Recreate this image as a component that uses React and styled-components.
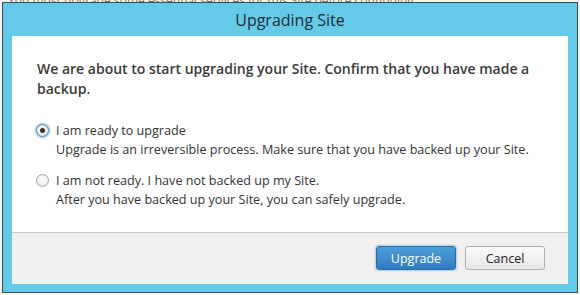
import React from "react";
import styled, { createGlobalStyle } from "styled-components";

const GlobalStyle = createGlobalStyle`
  html, body {
    margin: 0;
    padding: 0;
    background: #f7f7f5;
  }
  body {
    font-family: "Open Sans", "Liberation Sans", sans-serif;
    color: #333;
  }
`;

const Page = styled.div`
  position: relative;
  width: 580px;
  height: 295px;
  overflow: hidden;
`;

const BehindText = styled.div`
  height: 2px;
  overflow: hidden;
  padding-left: 8px;
  font-size: 12px;
  line-height: 2px;
  color: #777;
  white-space: nowrap;
`;

const Window = styled.div`
  position: absolute;
  left: 2px;
  top: 2px;
  width: 576px;
  height: 291px;
  box-sizing: border-box;
  border: 1px solid #3d4a50;
  background: #65c9e8;
  display: flex;
  flex-direction: column;
  padding: 0 9px 8px 9px;
`;

const TitleBar = styled.div`
  height: 33px;
  display: flex;
  align-items: center;
  justify-content: center;
  font-size: 16px;
  color: #1a2e38;
  padding-top: 1px;
  box-sizing: border-box;
`;

const Body = styled.div`
  flex: 1;
  background: #fff;
  display: flex;
  flex-direction: column;
`;

const Content = styled.div`
  flex: 1;
  padding: 23px 25px 0 25px;
  border-bottom: 1px solid #c8c8c8;
`;

const Lead = styled.p`
  margin: 0 0 22px 0;
  font-size: 14px;
  font-weight: 600;
  line-height: 20px;
  color: #3a3a3a;
`;

const Option = styled.label`
  display: grid;
  grid-template-columns: 19px 1fr;
  margin-bottom: 12px;
  font-size: 12.6px;
  line-height: 19px;
  color: #333;
`;

const Radio = styled.span`
  width: 13px;
  height: 13px;
  margin-top: 3px;
  margin-left: -1px;
  box-sizing: border-box;
  border-radius: 50%;
  border: 1px solid ${p => (p.checked ? "#4a7fa8" : "#a6a6a6")};
  background: radial-gradient(circle at 50% 40%, #fdfdfd 0%, #e6e6e6 100%);
  box-shadow: ${p => (p.checked ? "0 0 2px 1px rgba(80,150,210,0.6)" : "none")};
  display: flex;
  align-items: center;
  justify-content: center;
  &::after {
    content: "";
    display: ${p => (p.checked ? "block" : "none")};
    width: 5px;
    height: 5px;
    border-radius: 50%;
    background: #333;
  }
`;

const Label = styled.span`
  grid-column: 2;
`;

const Desc = styled.span`
  grid-column: 2;
`;

const Footer = styled.div`
  height: 51px;
  background: #f0f0f0;
  display: flex;
  align-items: center;
  justify-content: flex-end;
  gap: 9px;
  padding-right: 23px;
  padding-bottom: 1px;
  box-sizing: border-box;
`;

const Button = styled.button`
  width: 80px;
  height: 24px;
  box-sizing: border-box;
  border-radius: 3px;
  font-family: "Open Sans", "Liberation Sans", sans-serif;
  font-size: 12.5px;
  padding: 0;
  border: 1px solid ${p => (p.primary ? "#2a6aa6" : "#adadad")};
  color: ${p => (p.primary ? "#fff" : "#222")};
  background: ${p =>
    p.primary
      ? "linear-gradient(#4d9fd9, #2f7bbf)"
      : "linear-gradient(#fbfbfb, #e6e6e6)"};
  box-shadow: ${p =>
    p.primary ? "0 0 2px 1px rgba(80,160,220,0.45)" : "none"};
`;

export default function App() {
  return (
    <Page>
      <GlobalStyle />
      <BehindText>
        You must upgrade some essential services for this Site before continuing.
      </BehindText>
      <Window>
        <TitleBar>Upgrading Site</TitleBar>
        <Body>
          <Content>
            <Lead>
              We are about to start upgrading your Site. Confirm that you have made a
              backup.
            </Lead>
            <Option>
              <Radio checked />
              <Label>I am ready to upgrade</Label>
              <Desc>
                Upgrade is an irreversible process. Make sure that you have backed up your Site.
              </Desc>
            </Option>
            <Option>
              <Radio />
              <Label>I am not ready. I have not backed up my Site.</Label>
              <Desc>After you have backed up your Site, you can safely upgrade.</Desc>
            </Option>
          </Content>
          <Footer>
            <Button primary>Upgrade</Button>
            <Button>Cancel</Button>
          </Footer>
        </Body>
      </Window>
    </Page>
  );
}
